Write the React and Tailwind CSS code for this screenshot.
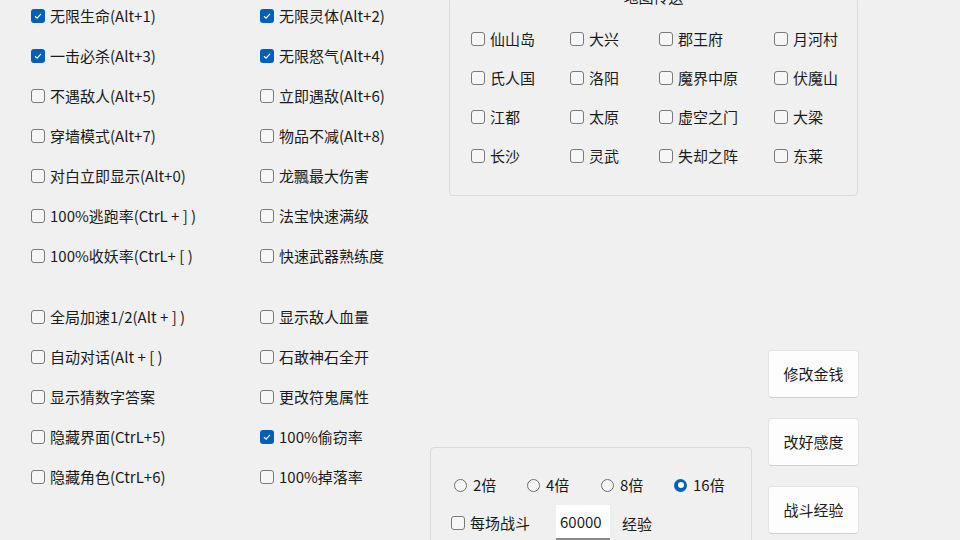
import { useState } from "react";

const leftA = [
  ["无限生命(Alt+1)", true],
  ["一击必杀(Alt+3)", true],
  ["不遇敌人(Alt+5)", false],
  ["穿墙模式(Alt+7)", false],
  ["对白立即显示(Alt+0)", false],
  ["100%逃跑率(CtrL + ] )", false],
  ["100%收妖率(CtrL+ [ )", false],
];
const leftB = [
  ["全局加速1/2(Alt + ] )", false],
  ["自动对话(Alt + [ )", false],
  ["显示猜数字答案", false],
  ["隐藏界面(CtrL+5)", false],
  ["隐藏角色(CtrL+6)", false],
];
const rightA = [
  ["无限灵体(Alt+2)", true],
  ["无限怒气(Alt+4)", true],
  ["立即遇敌(Alt+6)", false],
  ["物品不减(Alt+8)", false],
  ["龙飄最大伤害", false],
  ["法宝快速满级", false],
  ["快速武器熟练度", false],
];
const rightB = [
  ["显示敌人血量", false],
  ["石敢神石全开", false],
  ["更改符鬼属性", false],
  ["100%偷窃率", true],
  ["100%掉落率", false],
];

const maps = [
  ["仙山岛", "大兴", "郡王府", "月河村"],
  ["氏人国", "洛阳", "魔界中原", "伏魔山"],
  ["江都", "太原", "虚空之门", "大梁"],
  ["长沙", "灵武", "失却之阵", "东莱"],
];

const Box = ({ checked }) =>
  checked ? (
    <span className="w-[14px] h-[14px] rounded-[3px] bg-[#005fb8] flex items-center justify-center shrink-0">
      <svg width="10" height="10" viewBox="0 0 10 10">
        <polyline points="2,5.2 4.1,7.2 8,2.8" fill="none" stroke="#fff" strokeWidth="1.2" />
      </svg>
    </span>
  ) : (
    <span className="w-[14px] h-[14px] rounded-[3px] border border-[#7a7a7a] bg-[#f6f6f6] shrink-0" />
  );

const Check = ({ label, init }) => {
  const [on, setOn] = useState(init);
  return (
    <label onClick={() => setOn(!on)} className="h-[24px] flex items-center gap-[5px] cursor-default whitespace-pre">
      <Box checked={on} />
      <span>{label}</span>
    </label>
  );
};

const Radio = ({ label, checked }) => (
  <div className="flex items-center gap-[6px]">
    {checked ? (
      <span className="w-[13px] h-[13px] rounded-full bg-[#005fb8] flex items-center justify-center">
        <span className="w-[6px] h-[6px] rounded-full bg-white" />
      </span>
    ) : (
      <span className="w-[13px] h-[13px] rounded-full border border-[#6e6e6e] bg-[#f6f6f6]" />
    )}
    <span>{label}</span>
  </div>
);

const Btn = ({ children }) => (
  <button className="w-[91px] h-[48px] rounded-[4px] bg-[#fdfdfd] border border-[#e3e3e3] border-b-[#cfcfcf] text-[15px] text-[#1b1b1b]">
    {children}
  </button>
);

const Column = ({ top, bottom, width }) => (
  <div className={`flex flex-col gap-[16px] ${width}`}>
    {top.map(([l, c]) => (
      <Check key={l} label={l} init={c} />
    ))}
    <div className="h-[21px] -mb-[16px]" />
    {bottom.map(([l, c]) => (
      <Check key={l} label={l} init={c} />
    ))}
  </div>
);

export default function App() {
  return (
    <div
      className="w-[960px] h-[540px] overflow-hidden bg-[#f0f0f0] text-[15px] leading-[20px] text-[#1b1b1b] flex"
      style={{ fontFamily: '"Microsoft YaHei UI", "Noto Sans CJK SC", "Noto Sans", sans-serif' }}
    >
      {/* cheat toggles */}
      <div className="w-[430px] pl-[31px] pt-[4px] flex">
        <Column top={leftA} bottom={leftB} width="w-[229px]" />
        <Column top={rightA} bottom={rightB} width="w-[170px]" />
      </div>

      <div className="flex flex-col w-[430px]">
        {/* map teleport */}
        <fieldset className="ml-[19px] w-[409px] -mt-[13px] border border-[#dadada] rounded-[4px] pb-[27px]">
          <legend className="mx-auto px-[4px] h-[20px]">地图传送</legend>
          <div className="flex flex-col gap-[15px] pt-[20px] pl-[21px]">
            {maps.map((row, i) => (
              <div key={i} className="flex">
                {row.map((m, j) => (
                  <div key={m} className={j === 0 ? "w-[99px]" : j === 1 ? "w-[89px]" : j === 2 ? "w-[115px]" : ""}>
                    <Check label={m} init={false} />
                  </div>
                ))}
              </div>
            ))}
          </div>
        </fieldset>

        <div className="flex items-start gap-[16px] mt-[154px]">
          {/* experience multiplier */}
          <div className="mt-[97px] w-[322px] h-[130px] shrink-0 border border-[#dadada] rounded-[4px] pl-[23px] pt-[27px]">
            <div className="flex h-[20px]">
              <div className="w-[73px]"><Radio label="2倍" /></div>
              <div className="w-[74px]"><Radio label="4倍" /></div>
              <div className="w-[73px]"><Radio label="8倍" /></div>
              <Radio label="16倍" checked />
            </div>
            <div className="flex items-center mt-[10px] -ml-[3px]">
              <div className="w-[105px]">
                <Check label="每场战斗" init={false} />
              </div>
              <input
                defaultValue="60000"
                className="w-[54px] h-[35px] bg-white border-b-2 border-[#8a8a8a] px-[4px] text-[15px] outline-none"
              />
              <span className="ml-[12px] mt-[2px]">经验</span>
            </div>
          </div>

          {/* actions */}
          <div className="flex flex-col gap-[20px]">
            <Btn>修改金钱</Btn>
            <Btn>改好感度</Btn>
            <Btn>战斗经验</Btn>
          </div>
        </div>
      </div>
    </div>
  );
}
